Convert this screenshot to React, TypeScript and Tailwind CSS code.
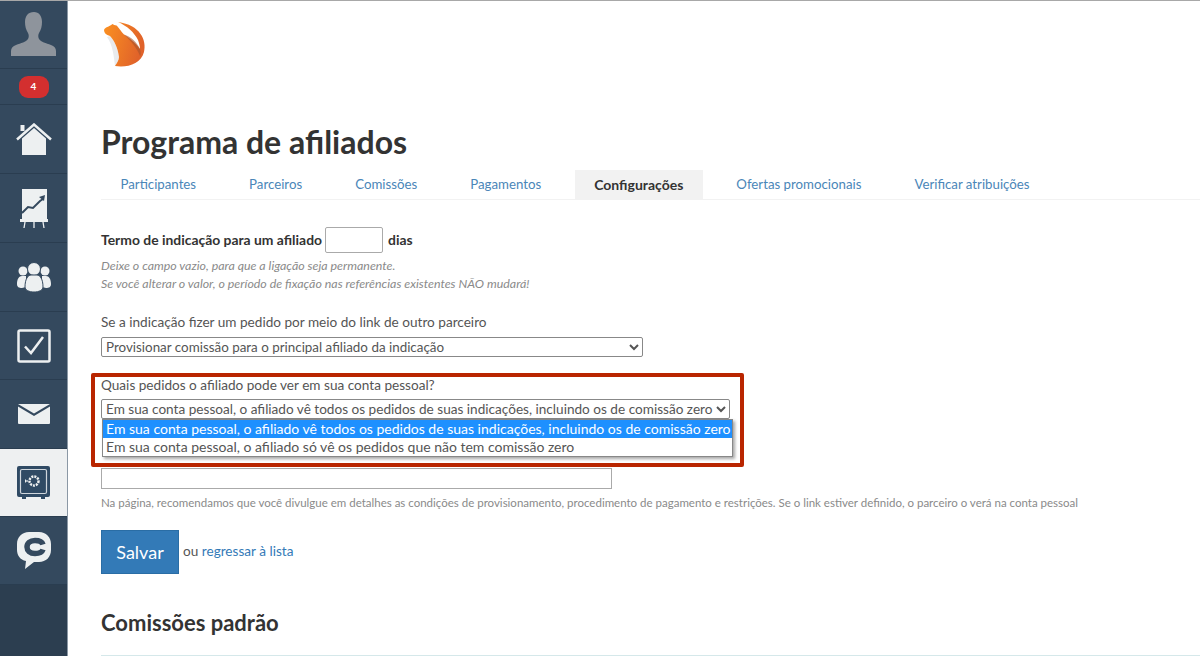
import React from "react";

const F = { fontFamily: "Lato, 'Open Sans', sans-serif" };

function NavItem({ h, active, children }: { h: string; active?: boolean; children: React.ReactNode }) {
  return (
    <div className={`${h} flex items-center justify-center border-b border-[#2a3d50] ${active ? "bg-[#eef0f1]" : "bg-[#34495e]"}`}>
      {children}
    </div>
  );
}

const Avatar = () => (
  <svg width="46" height="46" viewBox="0 0 46 46">
    <path fill="#8e949c" d="M23 1c-6 0-9 4-9 10 0 4 1 8 3 11 1 2 1 4 0 6-2 3-7 4-12 6-3 1-5 3-5 6v5h45v-5c0-3-2-5-5-6-5-2-10-3-12-6-1-2-1-4 0-6 2-3 3-7 3-11 0-6-3-10-8-10z" />
  </svg>
);
const Home = () => (
  <svg width="36" height="33" viewBox="0 0 36 33">
    <path fill="none" stroke="#edf0f1" strokeWidth="2.500" d="M1 16.500 18 1.500l17 15" />
    <rect x="4.500" y="2" width="4" height="6" fill="#edf0f1" />
    <path fill="#edf0f1" d="M18 5 30 15.500V32H6V15.500z" />
  </svg>
);
const Chart = () => (
  <svg width="28" height="39" viewBox="0 0 28 39">
    <rect x="2" y="0" width="25" height="30" fill="#edf0f1" />
    <path d="M2 24 8 18l5 1 7-7 3-2" stroke="#34495e" strokeWidth="2" fill="none" />
    <path d="M19 8l6-2-1 6z" fill="#34495e" />
    <rect x="0" y="30" width="28" height="3" fill="#edf0f1" />
    <path d="M5 33 4 39M14 33v6M23 33l1 6" stroke="#edf0f1" strokeWidth="1.300" />
  </svg>
);
const Users = () => (
  <svg width="34" height="30" viewBox="0 0 34 30">
    <circle cx="6" cy="9" r="4.500" fill="#edf0f1" />
    <circle cx="28" cy="9" r="4.500" fill="#edf0f1" />
    <path fill="#edf0f1" d="M0 22c0-5 2-8 5-8h4v11l-4 1c-3 0-5-1-5-4zM34 22c0-5-2-8-5-8h-4v11l4 1c3 0 5-1 5-4z" />
    <circle cx="17" cy="7" r="6.500" fill="#edf0f1" stroke="#34495e" />
    <path fill="#edf0f1" stroke="#34495e" d="M8 25c0-8 3-12 6-12h6c3 0 6 4 6 12 0 3-4 5-9 5s-9-2-9-5z" />
  </svg>
);
const Check = () => (
  <svg width="34" height="34" viewBox="0 0 34 34">
    <rect x="1.500" y="1.500" width="31" height="31" rx="1.500" fill="none" stroke="#edf0f1" strokeWidth="2.500" />
    <path d="M8 17.500 14 24 26 8" fill="none" stroke="#edf0f1" strokeWidth="2.500" />
  </svg>
);
const Mail = () => (
  <svg width="32" height="20" viewBox="0 0 32 20">
    <path fill="#edf0f1" d="M0 0h32L16 9.500zM0 2.500 16 12 32 2.500V19a1 1 0 0 1-1 1H1a1 1 0 0 1-1-1z" />
  </svg>
);
const Safe = () => (
  <svg width="33" height="33" viewBox="0 0 33 33">
    <path fill="#2f4a64" d="M2 0h29a2 2 0 0 1 2 2v27a2 2 0 0 1-2 2h-3v2h-4v-2H9v2H5v-2H2a2 2 0 0 1-2-2V2a2 2 0 0 1 2-2z" />
    <rect x="3.500" y="3.500" width="26" height="24" rx="1.500" fill="none" stroke="#cfd6dc" strokeWidth="1.200" />
    <circle cx="17" cy="15" r="4.500" fill="none" stroke="#edf0f1" strokeWidth="2.500" strokeDasharray="2 1" />
    <path d="M8 15h3" stroke="#edf0f1" strokeWidth="1.200" />
    <path d="M8.500 13.500v3" stroke="#edf0f1" />
  </svg>
);
const Chat = () => (
  <svg width="34" height="37" viewBox="0 0 34 37">
    <path fill="#edf0f1" d="M12 0h10c7 0 12 5 12 12v6c0 7-5 12-12 12h-5l-9 7 1-8C3 28 0 23 0 18v-6C0 5 5 0 12 0z" />
    <path fill="none" stroke="#34495e" strokeWidth="5.500" d="M26 12.500c-1-3-4-4-8-4-5 0-8 3-8 6.500s3 6.500 8 6.500c4 0 7-1 8-4" />
  </svg>
);

const Logo = () => (
  <svg width="46" height="46" viewBox="0 0 46 46">
    <defs>
      <linearGradient id="lg" x1="0" y1="0" x2="1" y2="0.3">
        <stop offset="0" stopColor="#fb9121" />
        <stop offset="1" stopColor="#e0622a" />
      </linearGradient>
    </defs>
    <path fill="#e9ebed" d="M7 14c4 4 8 12 9 21 0 3-2 6-4 9-1-8-2-21-8-29z" />
    <path fill="url(#lg)" d="M9.500 2C6 5 2 5 1 8c0 3 2 5 6 6 4 4 8 12 9 21 0 3-2 6-4 9 12 2 26-2 29-14C44 18 37 3 15 0c9 4 16 10 20 18 1 3 2 6 2 9-5-7-11-11-16-14.500-3-3-6-8-7.500-9-1.500-.5-3-.5-4-1.500z" />
    <path fill="#a8542c" opacity=".6" d="M21 12.500C28 15 34 20 37 27c1 3 1 6 0 7-3-8-9-15-16-21.500z" />
  </svg>
);

const tabs = ["Participantes", "Parceiros", "Comissões", "Pagamentos", "Configurações", "Ofertas promocionais", "Verificar atribuições"];

export default function App() {
  return (
    <div style={F} className="flex h-[656px] w-[1200px] overflow-hidden border-t border-[#a8a8a8] bg-white text-[13.600px] text-[#555]">
      <aside className="flex w-[68px] shrink-0 flex-col border-r border-[#8b98a5] bg-[#2c3e50]">
        <NavItem h="h-[68px]"><div className="mt-[-2px]"><Avatar /></div></NavItem>
        <NavItem h="h-[36px]">
          <span className="flex h-[22px] w-[30px] items-center justify-center rounded-[9px] bg-[#d32f2f] text-[10px] font-bold text-white">4</span>
        </NavItem>
        <NavItem h="h-[69px]"><Home /></NavItem>
        <NavItem h="h-[69px]"><Chart /></NavItem>
        <NavItem h="h-[69px]"><Users /></NavItem>
        <NavItem h="h-[68px]"><Check /></NavItem>
        <NavItem h="h-[69px]"><Mail /></NavItem>
        <NavItem h="h-[68px]" active><Safe /></NavItem>
        <NavItem h="h-[68px]"><Chat /></NavItem>
      </aside>

      <main className="relative min-w-0 flex-1 pl-[33px]">
        <div className="pt-[21px] pl-[2px]"><Logo /></div>
        <h1 className="mt-[56px] text-[32px] leading-[36px] font-bold text-[#333]">Programa de afiliados</h1>
        <nav className="mt-[10px] flex h-[30px] border-b border-[#f2f2f2] text-[13.250px]">
          {tabs.map((t) => (
            <div key={t} className={`mr-[14px] flex items-center px-[19.500px] ${t === "Configurações" ? "bg-[#f2f2f2] text-[14px] font-bold text-[#333]" : "text-[#4a86b8]"}`}>{t}</div>
          ))}
        </nav>

        <div className="mt-[27px] flex items-center font-bold text-[13.900px] text-[#333]">
          <span>Termo de indicação para um afiliado</span>
          <input className="mr-[5px] ml-[3px] h-[26px] w-[58px] rounded-[2px] border border-[#aaa]" />
          <span>dias</span>
        </div>
        <p className="mt-[4px] text-[12.400px] leading-[18px] text-[#8a8a8a] italic">Deixe o campo vazio, para que a ligação seja permanente.<br />Se você alterar o valor, o período de fixação nas referências existentes NÃO mudará!</p>

        <p className="mt-[19px] leading-[20px]">Se a indicação fizer um pedido por meio do link de outro parceiro</p>
        <select className="mt-[5px] h-[20px] w-[542px] rounded-[2px] border border-[#888] text-[13.400px] text-[#555]">
          <option>Provisionar comissão para o principal afiliado da indicação</option>
        </select>

        <p className="mt-[18px] leading-[20px]">Quais pedidos o afiliado pode ver em sua conta pessoal?</p>
        <select className="mt-[4px] block h-[20px] w-[629px] rounded-[2px] border border-[#888] text-[13.600px] text-[#555]">
          <option>Em sua conta pessoal, o afiliado vê todos os pedidos de suas indicações, incluindo os de comissão zero</option>
        </select>

        <input className="mt-[49px] block h-[21px] w-[511px] border border-[#aaa]" />
        <p className="mt-[5px] text-[11.500px] leading-[18px] text-[#8a8a8a]">Na página, recomendamos que você divulgue em detalhes as condições de provisionamento, procedimento de pagamento e restrições. Se o link estiver definido, o parceiro o verá na conta pessoal</p>

        <div className="mt-[18px] flex items-center gap-[4px]">
          <button className="h-[44px] w-[78px] border border-[#2a6da5] bg-[#337ab7] text-[18px] text-white">Salvar</button>
          <span className="pb-[3px]">ou <span className="text-[#337ab7]">regressar à lista</span></span>
        </div>

        <h2 className="mt-[36px] text-[22px] leading-[26px] font-bold text-[#333]">Comissões padrão</h2>
        <div className="mt-[19px] h-[1px] bg-[#d5e8ea]" />

        <div className="absolute top-[372px] left-[23px] h-[94px] w-[653px] rounded-[2px] border-[4px] border-[#b92500]" />
        <div className="absolute top-[418px] left-[34px] w-[631px] border border-[#888] bg-white text-[14px] shadow-[2px_2px_3px_rgba(0,0,0,0.35)]">
          <div className="h-[18px] bg-[#1e90ff] pl-[3px] leading-[18px] text-white">Em sua conta pessoal, o afiliado vê todos os pedidos de suas indicações, incluindo os de comissão zero</div>
          <div className="h-[18px] pl-[3px] leading-[18px]">Em sua conta pessoal, o afiliado só vê os pedidos que não tem comissão zero</div>
        </div>
      </main>
    </div>
  );
}
